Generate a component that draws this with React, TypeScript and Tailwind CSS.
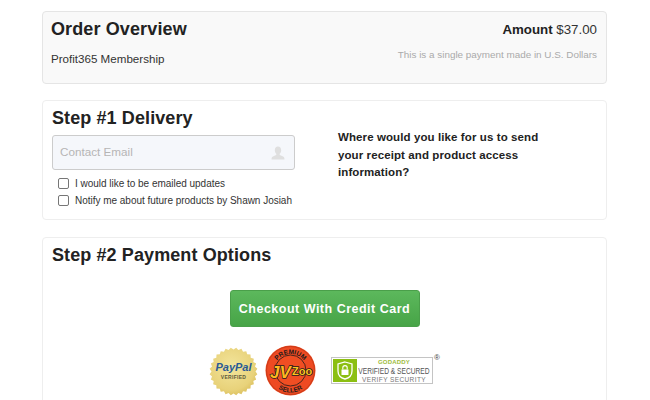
const sans = { fontFamily: '"Liberation Sans", Arial, sans-serif' };

function PaypalSeal() {
  const points: string[] = [];
  for (let i = 0; i < 56; i++) {
    const r = i % 2 ? 24 : 22;
    const a = (i / 56) * Math.PI * 2;
    points.push(`${24.5 + r * Math.cos(a)},${24.5 + r * Math.sin(a)}`);
  }
  return (
    <svg width="49" height="49" viewBox="0 0 49 49">
      <defs>
        <radialGradient id="gold" cx="0.45" cy="0.4" r="0.7">
          <stop offset="0" stopColor="#f3e59c" />
          <stop offset="0.7" stopColor="#e8d27a" />
          <stop offset="1" stopColor="#d4b650" />
        </radialGradient>
      </defs>
      <polygon points={points.join(" ")} fill="url(#gold)" />
      <text x="24.5" y="24" textAnchor="middle" fontSize="11" fontWeight="700" fontStyle="italic" fontFamily="Liberation Sans" fill="#2a5a96">
        PayPal
      </text>
      <text x="24.5" y="32" textAnchor="middle" fontSize="5" fontWeight="700" letterSpacing="0.3" fontFamily="Liberation Sans" fill="#5c5a3c">
        VERIFIED
      </text>
    </svg>
  );
}

function JvzooSeal() {
  return (
    <svg width="51" height="51" viewBox="0 0 51 51">
      <circle cx="25.5" cy="25.5" r="25" fill="#ee4a22" />
      <circle cx="25.5" cy="25.5" r="24" fill="none" stroke="#c93a17" strokeWidth="1" />
      <circle cx="25.5" cy="25.5" r="15.5" fill="#f04e23" stroke="#1b1b1b" strokeWidth="0.8" />
      <path id="jv-top" d="M8.5 26 A17 17 0 0 1 42.5 26" fill="none" />
      <path id="jv-bottom" d="M4 26 A21.5 21.5 0 0 0 47 26" fill="none" />
      <text fontSize="6.5" fontWeight="700" fontFamily="Liberation Sans" fill="#1b1b1b">
        <textPath href="#jv-top" startOffset="50%" textAnchor="middle">PREMIUM</textPath>
      </text>
      <text fontSize="6.5" fontWeight="700" fontFamily="Liberation Sans" fill="#1b1b1b">
        <textPath href="#jv-bottom" startOffset="50%" textAnchor="middle">SELLER</textPath>
      </text>
      <text x="5" y="33" fontSize="17" fontWeight="700" fontStyle="italic" fontFamily="Liberation Sans" fill="#ffb81f" stroke="#1b1b1b" strokeWidth="1.4" paintOrder="stroke">
        JV
      </text>
      <text x="27" y="30" fontSize="11" fontWeight="700" fontFamily="Liberation Sans" fill="#ffc21f" stroke="#1b1b1b" strokeWidth="1.6" paintOrder="stroke">
        Zoo
      </text>
    </svg>
  );
}

function GodaddySeal() {
  return (
    <div className="relative">
      <div className="flex h-[27px] w-[102px] items-center border border-[#c4c4c4] bg-white p-px">
        <div className="flex h-full w-[24px] shrink-0 items-center justify-center bg-[#8cbf12]">
          <svg width="16" height="19" viewBox="0 0 16 19">
            <path d="M8 1 L15 3 V10 C15 14 12 17 8 18 C4 17 1 14 1 10 V3 Z" fill="none" stroke="#fff" strokeWidth="1.3" />
            <rect x="4.5" y="8.5" width="7" height="5.5" fill="#fff" />
            <path d="M5.8 8.5 V6.8 a2.2 2.2 0 0 1 4.4 0 V8.5" fill="none" stroke="#fff" strokeWidth="1.1" />
          </svg>
        </div>
        <div className="flex min-w-0 flex-1 flex-col items-center whitespace-nowrap leading-none">
          <span className="text-[6px] font-bold leading-[7px] tracking-[0.2px] text-[#9dbb3a]">GODADDY</span>
          <span className="scale-x-[0.7] text-[9.5px] leading-[10px] text-[#555]">VERIFIED &amp; SECURED</span>
          <span className="text-[6.5px] leading-[7px] tracking-[0.4px] text-[#777]">VERIFY SECURITY</span>
        </div>
      </div>
      <span className="absolute -right-[7px] -top-[3px] text-[8px] leading-none text-[#444]">®</span>
    </div>
  );
}

function UserIcon() {
  return (
    <svg width="14" height="14" viewBox="0 0 14 14" className="shrink-0">
      <path
        d="M7 0.5 C9 0.5 10.2 2 10.2 4.2 C10.2 6 9.4 7.2 8.6 8 C8.6 9 9.5 9.4 11 10 C12.6 10.6 13.5 11.2 13.5 13.5 H0.5 C0.5 11.2 1.4 10.6 3 10 C4.5 9.4 5.4 9 5.4 8 C4.6 7.2 3.8 6 3.8 4.2 C3.8 2 5 0.5 7 0.5 Z"
        fill="#dfdfdf"
      />
    </svg>
  );
}

function Check({ label }: { label: string }) {
  return (
    <label className="flex h-[17px] items-center gap-[6px] pl-[6px]">
      <span className="h-[11px] w-[11px] shrink-0 rounded-[2px] border border-[#767676] bg-white" />
      <span className="text-[10px] tracking-[-0.02px] text-[#333]">{label}</span>
    </label>
  );
}

export default function App() {
  return (
    <div className="h-[400px] w-[650px] overflow-hidden bg-white pl-[42px] pr-[43px] pt-[11px] text-[#333]" style={sans}>
      <section className="flex h-[73px] justify-between rounded border border-[#e5e5e5] bg-[#f9f9f9] pl-[8px] pr-[9px]">
        <div>
          <h1 className="mt-[6px] text-[18px] font-bold leading-[22px] tracking-[0.12px] text-[#222]">Order Overview</h1>
          <p className="mt-[12px] text-[11.6px] leading-[14px]">Profit365 Membership</p>
        </div>
        <div className="text-right">
          <p className="mt-[9px] text-[13.3px] leading-[17px]">
            <b className="text-[#222]">Amount</b> $37.00
          </p>
          <p className="mt-[11px] text-[9.9px] leading-[12px] text-[#aaa]">This is a single payment made in U.S. Dollars</p>
        </div>
      </section>

      <section className="mt-[16px] flex h-[120px] rounded border border-[#eeeeee] bg-white pl-[9px] pr-[9px]">
        <div className="w-[243px] shrink-0">
          <h2 className="mt-[6px] text-[18px] font-bold leading-[22px] tracking-[0.1px] text-[#222]">Step #1 Delivery</h2>
          <div className="mb-[5px] mt-[6px] flex h-[35px] items-center justify-between rounded-[3px] border border-[#ccc] bg-[#f5f7fb] pl-[7px] pr-[9px]">
            <span className="-mt-px text-[11.7px] text-[#b5b5b5]">Contact Email</span>
            <UserIcon />
          </div>
          <Check label="I would like to be emailed updates" />
          <Check label="Notify me about future products by Shawn Josiah" />
        </div>
        <p className="ml-[43px] mt-[28px] w-[215px] text-[11.5px] font-bold leading-[17.5px] tracking-[0.1px] text-[#222]">
          Where would you like for us to send your receipt and product access information?
        </p>
      </section>

      <section className="mt-[17px] h-[200px] rounded border border-[#eeeeee] bg-white pl-[9px] pr-[9px]">
        <h2 className="mt-[6px] text-[18px] font-bold leading-[22px] tracking-[0.1px] text-[#222]">Step #2 Payment Options</h2>
        <div className="mt-[24px] flex justify-center">
          <button className="ml-px flex h-[37px] w-[190px] items-center justify-center rounded-[3px] border border-[#4a9f4a] bg-gradient-to-b from-[#5cb85c] to-[#47a447] pt-px pr-px text-[12.5px] font-bold tracking-[0.5px] text-white">
            Checkout With Credit Card
          </button>
        </div>
        <div className="mt-[20px] flex items-start">
          <div className="ml-[157px]"><PaypalSeal /></div>
          <div className="-mt-[2px] ml-[7px]"><JvzooSeal /></div>
          <div className="ml-[15px] mt-[10px]"><GodaddySeal /></div>
        </div>
      </section>
    </div>
  );
}
